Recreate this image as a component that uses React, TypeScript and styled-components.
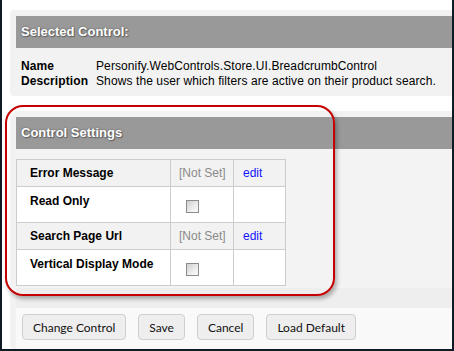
import React, { FC } from "react"
import styled, { createGlobalStyle } from "styled-components"

const GlobalStyle = createGlobalStyle`
  html, body {
    margin: 0;
    padding: 0;
    background: #fff;
  }
  body {
    font-family: "Liberation Sans", Arial, sans-serif;
    font-size: 12px;
    color: #000;
  }
`

const Frame = styled.div`
  position: relative;
  width: 454px;
  height: 351px;
  box-sizing: border-box;
  border: 2px solid #101a24;
  border-top: none;
  background: #fff;
  padding: 10px 0 0 8px;
  overflow: hidden;
  display: flex;
  flex-direction: column;
`

const Panel = styled.section<{ $grow?: boolean }>`
  background: #f2f2f2;
  border-radius: 4px 0 0 4px;
  padding-top: 6px;
  display: flex;
  flex-direction: column;
  ${({ $grow }) => ($grow ? "flex: 1; margin-top: 15px;" : "padding-bottom: 7px;")}
`

const Header = styled.h2`
  margin: 0 0 0 6px;
  height: 32px;
  background: #999999;
  color: #fff;
  font-size: 13px;
  font-weight: bold;
  line-height: 32px;
  padding-left: 5px;
  text-shadow: 0 0 2px #555, 1px 1px 1px #666;
`

const InfoGrid = styled.dl`
  margin: 11px 0 0 11px;
  display: grid;
  grid-template-columns: 75px 1fr;
  grid-auto-rows: 15px;
  line-height: 15px;
  letter-spacing: 0.1px;
  dt {
    font-weight: bold;
  }
  dd {
    margin: 0;
  }
`

const SettingsBody = styled.div`
  margin-left: 6px;
  background: #f3f3f3;
  padding-top: 10px;
  height: 129px;
`

const Table = styled.table`
  border-collapse: collapse;
  table-layout: fixed;
  width: 270px;
  td {
    border: 1px solid #cccccc;
    padding: 0;
  }
`

const Row = styled.tr<{ $shade: boolean; $tall: boolean }>`
  background: ${({ $shade }) => ($shade ? "#f2f2f2" : "#ffffff")};
  height: ${({ $tall }) => ($tall ? "36px" : "27px")};
`

const Label = styled.td<{ $top: boolean }>`
  font-weight: bold;
  padding-left: 13px !important;
  vertical-align: ${({ $top }) => ($top ? "top" : "middle")};
  padding-top: ${({ $top }) => ($top ? "7px" : "0")} !important;
`

const ValueCell = styled.td`
  padding-left: 8px !important;
  color: #8a8a8a;
  vertical-align: middle;
`

const EditCell = styled.td`
  padding-left: 9px !important;
  vertical-align: middle;
  a {
    color: #1414ff;
    text-decoration: none;
  }
`

const Checkbox = styled.span`
  display: block;
  width: 11px;
  height: 11px;
  margin-left: 7px;
  margin-top: 3px;
  border: 1px solid #8c8c8c;
  background: linear-gradient(135deg, #cfcfcf 0%, #eeeeee 60%, #fbfbfb 100%);
`

const Strip = styled.div`
  margin-left: 6px;
  height: 20px;
  background: #eeeeee;
`

const ButtonBar = styled.div`
  margin-left: 6px;
  flex: 1;
  background: #f9f9f9;
  padding: 6px 0 0 6px;
  display: flex;
  align-items: flex-start;
  gap: 12px;
`

const Button = styled.button`
  height: 26px;
  padding: 0 10px;
  background: #eeeeee;
  border: 1px solid #cfcfcf;
  border-radius: 4px;
  font-family: Lato, "Open Sans", sans-serif;
  font-size: 12px;
  color: #111;
`

const Annotation = styled.div`
  position: absolute;
  left: 3px;
  top: 105px;
  width: 330px;
  height: 191px;
  box-sizing: border-box;
  border: 2px solid #c40000;
  border-radius: 18px;
  box-shadow: 2px 3px 4px rgba(0, 0, 0, 0.3), inset 2px 2px 3px rgba(255, 255, 255, 0.6);
  pointer-events: none;
`

interface Setting {
  label: string
  kind: "text" | "bool"
}

const settings: Setting[] = [
  { label: "Error Message", kind: "text" },
  { label: "Read Only", kind: "bool" },
  { label: "Search Page Url", kind: "text" },
  { label: "Vertical Display Mode", kind: "bool" },
]

const App: FC = () => {
  return (
    <Frame>
      <GlobalStyle />
      <Panel>
        <Header>Selected Control:</Header>
        <InfoGrid>
          <dt>Name</dt>
          <dd>Personify.WebControls.Store.UI.BreadcrumbControl</dd>
          <dt>Description</dt>
          <dd>Shows the user which filters are active on their product search.</dd>
        </InfoGrid>
      </Panel>
      <Panel $grow>
        <Header>Control Settings</Header>
        <SettingsBody>
          <Table>
            <colgroup>
              <col style={{ width: 154 }} />
              <col style={{ width: 63 }} />
              <col style={{ width: 52 }} />
            </colgroup>
            <tbody>
              {settings.map(({ label, kind }, i) => (
                <Row key={label} $shade={i % 2 === 0} $tall={kind === "bool"}>
                  <Label $top={kind === "bool"}>{label}</Label>
                  {kind === "text" ? (
                    <>
                      <ValueCell>[Not Set]</ValueCell>
                      <EditCell>
                        <a href="#">edit</a>
                      </EditCell>
                    </>
                  ) : (
                    <>
                      <ValueCell>
                        <Checkbox />
                      </ValueCell>
                      <td />
                    </>
                  )}
                </Row>
              ))}
            </tbody>
          </Table>
        </SettingsBody>
        <Strip />
        <ButtonBar>
          <Button>Change Control</Button>
          <Button>Save</Button>
          <Button>Cancel</Button>
          <Button>Load Default</Button>
        </ButtonBar>
      </Panel>
      <Annotation />
    </Frame>
  )
}

export default App
